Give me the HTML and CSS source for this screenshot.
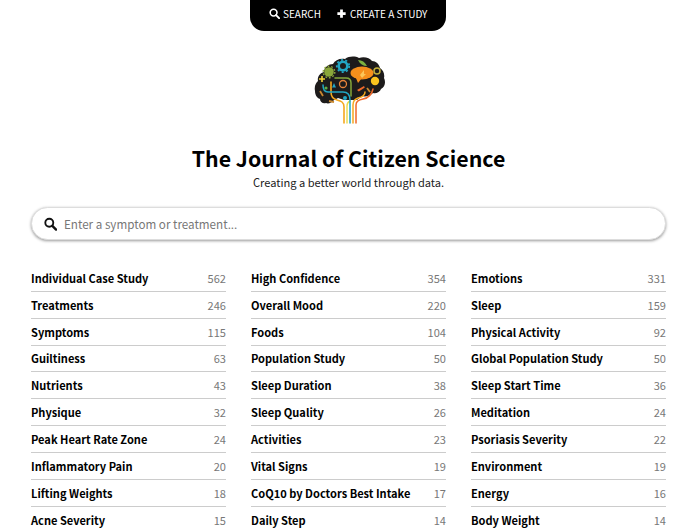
FILE: index.html
```html
<!DOCTYPE html>
<html lang="en">
<head>
    <meta charset="UTF-8">
    <title>The Journal of Citizen Science</title>
    <link rel="stylesheet" href="styles.css">
</head>
<body>
    <nav class="topbar">
        <a class="top-link" href="#">
            <svg class="top-icon" viewBox="0 0 12 12"><circle cx="5" cy="5" r="3.7" fill="none" stroke="#fff" stroke-width="1.7"/><path d="M7.7 7.7L11 11" stroke="#fff" stroke-width="2.1" stroke-linecap="round"/></svg>
            SEARCH
        </a>
        <a class="top-link" href="#">
            <svg class="top-icon" viewBox="0 0 12 12"><path d="M6 1.5v9M1.5 6h9" stroke="#fff" stroke-width="3"/></svg>
            CREATE A STUDY
        </a>
    </nav>

    <header class="masthead">
        <svg class="logo" viewBox="12 4 72 72">
            <path d="M14 41c-1-5 1-8 3-10-1-4 2-8 6-9 0-5 5-8 9-8 2-4 7-6 12-5 4-3 10-3 14-1 5-2 11 0 13 3 4 0 7 3 8 7 3 2 5 6 4 10 2 4 1 9-3 11-1 3-5 5-8 4-3 3-8 4-11 3l-5 4H43l-6-2c-2 1-3 2-4 2-2 3-6 4-8 3-3 1-6-1-6-4-3-1-5-4-5-8z" fill="#1d1b1b"/>
            <g fill="none" stroke-linecap="round">
                <path d="M43 73V57c0-5-3-6-7-7-4-1-6-3-6-8V32" stroke="#f5a81f" stroke-width="1.600"/>
                <path d="M46 73V56c0-3 1-4 3-5" stroke="#e9dc4b" stroke-width="1.400"/>
                <path d="M34 28h11c3 0 5 2 5 5v13" stroke="#86a83a" stroke-width="1.500"/>
                <path d="M49 73V50c0-6-3-8-7-8H27c-3 0-5-2-5-7" stroke="#22a6c4" stroke-width="1.500"/>
                <path d="M52 73V55c0-4 2-6 5-7 5-1 7-3 7-6" stroke="#f5a81f" stroke-width="1.500"/>
                <path d="M55 73V55c0-4 3-5 7-6 5-1 9-5 10-10" stroke="#f0692a" stroke-width="1.500"/>
                <circle cx="42" cy="16" r="4.300" stroke="#22a6c4" stroke-width="2.600"/>
                <circle cx="42" cy="16" r="6.200" stroke="#22a6c4" stroke-width="1.800" stroke-dasharray="2 2.400" stroke-linecap="butt"/>
                <circle cx="42" cy="34" r="3.500" stroke="#e9833a" stroke-width="1.300"/>
                <circle cx="76" cy="21" r="3" stroke="#c2b13a" stroke-width="1.500"/>
            </g>
            <circle cx="28" cy="22" r="4.800" fill="#8aa63a"/>
            <circle cx="28" cy="22" r="5.800" fill="none" stroke="#8aa63a" stroke-width="1.400" stroke-dasharray="1.800 1.800"/>
            <ellipse cx="61" cy="23" rx="11.500" ry="6.500" fill="#f58f1c"/>
            <path d="M55 28l2 5 4-5z" fill="#f58f1c"/>
            <path d="M59 25l4-5v4l2 0-4 4z" fill="#fbc65a"/>
            <circle cx="74" cy="31" r="4.200" fill="#fbc41e"/>
            <path d="M57 10c4 0 7 2 9 6-4 0-7-2-9-6z" fill="#7db23f"/>
            <path d="M18 29h6M21 26v6" stroke="#f3d43a" stroke-width="1.600"/>
            <circle cx="25" cy="38" r="1.600" fill="#5cae4a"/>
            <path d="M33 33l2 4.500h-4z" fill="#22a6c4"/>
            <path d="M56 40l7-4 0.800 1.600-6 4z" fill="#f0692a"/>
            <circle cx="44" cy="48" r="2" fill="#22a6c4"/>
            <path d="M19 41l3 5M28 51l5 1M66 38l3 4" stroke="#c9872e" stroke-width="1.800"/>
        </svg>
        <h1 class="site-title">The Journal of Citizen Science</h1>
        <p class="tagline">Creating a better world through data.</p>
    </header>

    <div class="search">
        <svg class="search-icon" viewBox="0 0 14 14"><circle cx="5.700" cy="5.700" r="4.300" fill="none" stroke="#111" stroke-width="2"/><path d="M9 9l4 4" stroke="#111" stroke-width="2.600" stroke-linecap="round"/></svg>
        <span class="search-hint">Enter a symptom or treatment...</span>
    </div>

    <div class="columns">
        <ul class="tag-list">
            <li class="tag-row"><span class="tag-name">Individual Case Study</span><span class="tag-count">562</span></li>
            <li class="tag-row"><span class="tag-name">Treatments</span><span class="tag-count">246</span></li>
            <li class="tag-row"><span class="tag-name">Symptoms</span><span class="tag-count">115</span></li>
            <li class="tag-row"><span class="tag-name">Guiltiness</span><span class="tag-count">63</span></li>
            <li class="tag-row"><span class="tag-name">Nutrients</span><span class="tag-count">43</span></li>
            <li class="tag-row"><span class="tag-name">Physique</span><span class="tag-count">32</span></li>
            <li class="tag-row"><span class="tag-name">Peak Heart Rate Zone</span><span class="tag-count">24</span></li>
            <li class="tag-row"><span class="tag-name">Inflammatory Pain</span><span class="tag-count">20</span></li>
            <li class="tag-row"><span class="tag-name">Lifting Weights</span><span class="tag-count">18</span></li>
            <li class="tag-row"><span class="tag-name">Acne Severity</span><span class="tag-count">15</span></li>
        </ul>
        <ul class="tag-list">
            <li class="tag-row"><span class="tag-name">High Confidence</span><span class="tag-count">354</span></li>
            <li class="tag-row"><span class="tag-name">Overall Mood</span><span class="tag-count">220</span></li>
            <li class="tag-row"><span class="tag-name">Foods</span><span class="tag-count">104</span></li>
            <li class="tag-row"><span class="tag-name">Population Study</span><span class="tag-count">50</span></li>
            <li class="tag-row"><span class="tag-name">Sleep Duration</span><span class="tag-count">38</span></li>
            <li class="tag-row"><span class="tag-name">Sleep Quality</span><span class="tag-count">26</span></li>
            <li class="tag-row"><span class="tag-name">Activities</span><span class="tag-count">23</span></li>
            <li class="tag-row"><span class="tag-name">Vital Signs</span><span class="tag-count">19</span></li>
            <li class="tag-row"><span class="tag-name">CoQ10 by Doctors Best Intake</span><span class="tag-count">17</span></li>
            <li class="tag-row"><span class="tag-name">Daily Step</span><span class="tag-count">14</span></li>
        </ul>
        <ul class="tag-list">
            <li class="tag-row"><span class="tag-name">Emotions</span><span class="tag-count">331</span></li>
            <li class="tag-row"><span class="tag-name">Sleep</span><span class="tag-count">159</span></li>
            <li class="tag-row"><span class="tag-name">Physical Activity</span><span class="tag-count">92</span></li>
            <li class="tag-row"><span class="tag-name">Global Population Study</span><span class="tag-count">50</span></li>
            <li class="tag-row"><span class="tag-name">Sleep Start Time</span><span class="tag-count">36</span></li>
            <li class="tag-row"><span class="tag-name">Meditation</span><span class="tag-count">24</span></li>
            <li class="tag-row"><span class="tag-name">Psoriasis Severity</span><span class="tag-count">22</span></li>
            <li class="tag-row"><span class="tag-name">Environment</span><span class="tag-count">19</span></li>
            <li class="tag-row"><span class="tag-name">Energy</span><span class="tag-count">16</span></li>
            <li class="tag-row"><span class="tag-name">Body Weight</span><span class="tag-count">14</span></li>
        </ul>
    </div>
</body>
</html>
```

FILE: styles.css
```css
html, body {
  height: 529px;
  overflow: hidden;
}

body {
  margin: 0;
  padding-right: 3px;
  background: #fff;
  color: #000;
  font-family: "Noto Sans CJK JP", "Source Sans Pro", "Noto Sans", sans-serif;
}

.topbar {
  box-sizing: border-box;
  width: 196px;
  height: 31px;
  margin-left: 250px;
  padding-left: 19px;
  display: flex;
  gap: 15px;
  background: #000;
  border-radius: 0 0 14px 14px;
}

.top-link {
  display: flex;
  align-items: center;
  gap: 3px;
  height: 27px;
  color: #fff;
  font-size: 10px;
  text-decoration: none;
}

.top-icon {
  width: 11px;
  height: 11px;
}

.masthead {
  text-align: center;
}

.logo {
  display: block;
  width: 72px;
  height: 72px;
  margin: 23px auto 0;
}

.site-title {
  margin: 17px 0 0;
  font-size: 21.3px;
  line-height: 30px;
  font-weight: 700;
}

.tagline {
  margin: 1px 0 0;
  font-size: 11.1px;
  line-height: 16px;
  color: #222;
}

.search {
  display: flex;
  align-items: center;
  gap: 7px;
  height: 31px;
  margin: 17px 31px 0 31px;
  padding-left: 12px;
  border: 1px solid #ddd;
  border-radius: 17px;
  box-shadow: 0 1px 3px rgba(0, 0, 0, 0.4);
  background: #fff;
}

.search-icon {
  width: 13px;
  height: 14px;
}

.search-hint {
  color: #777;
  font-size: 11.65px;
}

.columns {
  display: grid;
  grid-template-columns: repeat(3, 195px);
  gap: 25px;
  margin: 25px 0 0 31px;
}

.tag-list {
  margin: 0;
  padding: 0;
  list-style: none;
}

.tag-row {
  display: flex;
  justify-content: space-between;
  align-items: center;
  height: 25.85px;
  border-bottom: 1px solid #ccc;
  font-size: 11.05px;
}

.tag-name {
  font-weight: 700;
}

.tag-count {
  color: #777;
}
```
